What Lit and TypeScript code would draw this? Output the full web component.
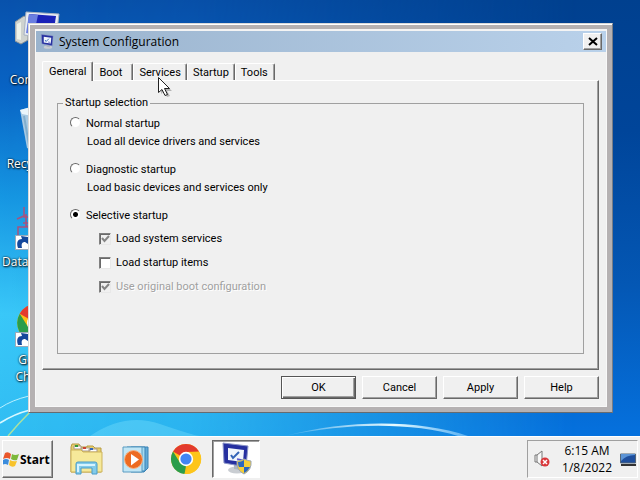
import { LitElement, html, css, svg } from "lit";
import { customElement, state } from "lit/decorators.js";

const shortcutArrow = svg`
  <rect x="0.5" y="23.5" width="14" height="14" fill="#fff" stroke="#9ab"/>
  <path d="M3 36c-2-6 0-9 4-9l-1-3 7 1 0 7-3-2c-3 0-4 2-3 6z" fill="#15489c"/>`;

const chromeLogo = svg`
  <circle cx="16" cy="16" r="15" fill="#fbc116"/>
  <path d="M16 16 L3 8.500A15 15 0 0 1 29 8.500 L16 9z" fill="#e33b2e"/>
  <path d="M3 8.500 L9.900 19.500 L16 23 L14.500 31A15 15 0 0 1 3 8.500z" fill="#2a9d4b"/>
  <path d="M16 9H29.300A15 15 0 0 1 14.500 31L22 19.500z" fill="#fdc51b"/>
  <circle cx="16" cy="16" r="7.200" fill="#fff"/>
  <circle cx="16" cy="16" r="5.600" fill="#4285f4"/>`;

@customElement("desktop-wallpaper")
export class DesktopWallpaper extends LitElement {
  static styles = css`
    :host { position: absolute; inset: 0; }
    svg { display: block; width: 100%; height: 100%; }
  `;
  render() {
    return html`<svg viewBox="0 0 640 436" preserveAspectRatio="none" aria-hidden="true">
      <defs>
        <linearGradient id="base" x1="0" y1="0" x2="0" y2="1">
          <stop offset="0" stop-color="#00408f"/><stop offset="0.3" stop-color="#00459a"/>
          <stop offset="0.65" stop-color="#0457b4"/><stop offset="1" stop-color="#0571de"/>
        </linearGradient>
        <linearGradient id="left" x1="0" y1="0" x2="0" y2="1">
          <stop offset="0" stop-color="#0852ac"/><stop offset="0.2" stop-color="#0863c4"/>
          <stop offset="0.45" stop-color="#1596e2"/><stop offset="0.72" stop-color="#39c8f8"/>
          <stop offset="1" stop-color="#30bdf2"/>
        </linearGradient>
        <linearGradient id="fade" x1="0" y1="0" x2="1" y2="0">
          <stop offset="0" stop-color="#fff"/><stop offset="0.3" stop-color="#ddd"/>
          <stop offset="0.9" stop-color="#000"/>
        </linearGradient>
        <linearGradient id="arc" x1="0" y1="0" x2="1" y2="0">
          <stop offset="0" stop-color="#fff" stop-opacity="0.1"/><stop offset="0.6" stop-color="#e8fbff"/>
          <stop offset="1" stop-color="#8cd0ff" stop-opacity="0.6"/>
        </linearGradient>
        <mask id="m"><rect width="640" height="436" fill="url(#fade)"/></mask>
      </defs>
      <rect width="640" height="436" fill="url(#base)"/>
      <rect width="640" height="436" fill="url(#left)" mask="url(#m)"/>
      <path d="M90 436Q125 412 160 424T200 436z" fill="#8deaff" opacity="0.3"/>
      <path d="M285 436C350 419 420 420 468 436L458 436C415 423 350 422 285 436z" fill="url(#arc)"/>
      <path d="M0 423Q14 414 30 410" fill="none" stroke="#d8f8ff" stroke-width="1.500"/>
      <path d="M0 408Q12 400 29 396" fill="none" stroke="#b8f0ff"/>
      <path d="M8 436Q18 424 30 412" fill="none" stroke="#a9e2a0" stroke-width="1.500"/>
    </svg>`;
  }
}

@customElement("desktop-icons")
export class DesktopIcons extends LitElement {
  static styles = css`
    :host { position: relative; display: block; width: 76px; }
    ul { list-style: none; margin: 0; padding: 8px 0 0; display: grid; grid-auto-rows: 98px; }
    li { display: flex; flex-direction: column; align-items: center; gap: 3px; }
    svg { width: 46px; height: 46px; }
    .tall svg { height: 60px; }
    span { font: 12px/17px "Open Sans", "Noto Sans", sans-serif; color: #fff; text-align: center;
      text-shadow: 1px 1px 2px #000, 0 0 2px #000; }
    .start { align-self: flex-start; padding-left: 2px; }
  `;
  render() {
    return html`<ul>
      <li class="tall"><svg viewBox="0 0 46 60" aria-hidden="true">
        <path d="M0 14l9-6 4 2v22l-7 4-6-3z" fill="#cfd3cf" stroke="#8a9297"/>
        <path d="M2 16l4-2v18l-4-1z" fill="#eef2e9"/>
        <path d="M11 4l33 2-3 25-32-4z" fill="#e9edf4" stroke="#a8b3c2"/>
        <path d="M14 6l27 2-3 20-26-3z" fill="#1a22b8"/>
        <path d="M14 6l9 1-4 19-8-1z" fill="#6a7ee0"/></svg><span>Computer</span></li>
      <li><svg viewBox="0 0 46 46" aria-hidden="true">
        <path d="M5 4q16-6 34 0l-6 38q-12 5-21 0z" fill="#b8d3e6" opacity="0.9"/>
        <path d="M5 4q16-6 34 0l-2 4q-15 4-30 0z" fill="#eaf5fb"/>
        <path d="M9 10l5 29M16 11l3 30" stroke="#82aecd" stroke-width="2"/></svg><span>Recycle Bin</span></li>
      <li><svg viewBox="0 0 46 46" aria-hidden="true">
        <path d="M2 15l9-4v12H3v9h8M9 3v10H18M8 19h9M11 21l7 8v8l-8-3" fill="none" stroke="#a8527f" stroke-width="1.500"/>
        <g transform="translate(0 8)">${shortcutArrow}</g></svg><span class="start">DataW</span></li>
      <li><svg viewBox="0 0 46 46" aria-hidden="true">
        <g transform="translate(1 1) scale(1.250)">${chromeLogo}</g>
        <g transform="translate(0 7)">${shortcutArrow}</g></svg><span>Google<br>Chrome</span></li>
    </ul>`;
  }
}

const monitor = svg`
  <ellipse cx="18" cy="28" rx="9" ry="3.500" fill="#c9cdd2"/>
  <path d="M15 22l7 2 0 4-7-1z" fill="#aeb6bf"/>
  <path d="M4 1l25 3-2 21-22-4z" fill="#2630a0" stroke="#8b95c8"/>
  <path d="M9 6l16 2-1 12-15-2z" fill="#f1f6fc"/>
  <path d="M12 13l2 3 6-6" fill="none" stroke="#3465b8" stroke-width="2"/>
  <path d="M18 17l5 1" stroke="#55c" stroke-width="1.500"/>`;

@customElement("config-window")
export class ConfigWindow extends LitElement {
  @state() private mode = "selective";

  static styles = css`
    :host { display: block; background: #b5b1b2; padding: 5px 5px 5px 6px; box-sizing: border-box;
      border: 1px solid #d9d9d9; border-right-color: #767c86; border-bottom-color: #666b70;
      box-shadow: inset 1px 1px #fff; font: 11px/18px Roboto, "Liberation Sans", sans-serif; color: #000; }
    * { box-sizing: border-box; }
    .body { background: #f0f0f0; border: 1px solid #f8f8f8; border-top: 2px solid #f4f4f4; }
    header { display: flex; align-items: center; height: 21px; padding: 0 4px;
      background: linear-gradient(90deg, #9ab3cd, #b9d1ea); }
    header svg { width: 15px; height: 15px; margin-right: 4px; }
    h1 { flex: 1; margin: 0; font: 12px/20px "Open Sans", "Noto Sans", sans-serif; }
    button { font: inherit; color: inherit; background: #f0f0f0; padding: 0; border: 1px solid;
      border-color: #fff #696969 #696969 #fff; box-shadow: inset -1px -1px #a0a0a0; }
    .close { width: 19px; height: 17px; display: grid; place-items: center; }
    .close svg { width: 10px; height: 9px; margin: 0; }
    main { padding: 9px 7px 7px 6px; }
    nav { display: flex; align-items: flex-end; height: 20px; margin-bottom: -1px; position: relative; }
    .tab { height: 17px; margin-bottom: 1px; min-width: 40px; padding: 0 5px; text-align: left; line-height: 15px;
      border-bottom: 0; box-shadow: inset -1px 0 #a0a0a0; border-radius: 2px 2px 0 0; }
    .tab.on { height: 20px; margin-bottom: 0; padding: 0 6px; line-height: 15px; }
    .panel { border: 1px solid; border-color: #fff #696969 #696969 #fff; box-shadow: inset -1px -1px #a0a0a0;
      padding: 15px 14px; }
    fieldset { margin: 0; min-width: 0; padding: 5px 12px 54px; border: 1px solid #a0a0a0; }
    legend { margin-left: -7px; padding: 0 2px; line-height: 14px; }
    .choice { display: grid; grid-template-columns: 16px 1fr; margin-bottom: 10px; }
    .choice p { grid-column: 2; margin: 0; padding-left: 1px; }
    .choice:last-of-type { margin-bottom: 0; }
    .sub { display: grid; grid-auto-rows: 24px; padding: 2px 0 0 29px; }
    .sub div { display: grid; grid-template-columns: 17px 1fr; align-items: center; }
    input { appearance: none; margin: 0; width: 12px; height: 12px; background: #fff;
      border: 1px solid; border-color: #808080 #e8e8e8 #e8e8e8 #808080; box-shadow: inset 1px 1px #696969; }
    input[type="radio"] { border-radius: 50%; width: 11px; height: 11px; margin-top: 2px; box-shadow: none;
      border-color: #696969 #f0f0f0 #f0f0f0 #696969; }
    input[type="radio"]:checked { background: radial-gradient(circle, #000 2px, #fff 3px); }
    .check { display: grid; width: 12px; height: 12px; }
    .check > * { grid-area: 1 / 1; }
    .check svg { width: 12px; height: 12px; z-index: 1; pointer-events: none; }
    .check input:disabled { background: #f0f0f0; }
    .off { color: #a0a0a0; text-shadow: 1px 1px #fff; }
    footer { display: flex; justify-content: flex-end; gap: 6px; padding-top: 6px; }
    footer button { width: 75px; height: 23px; }
    footer .default { border-color: #555; box-shadow: inset 1px 1px #fff, inset -1px -1px #696969, inset -2px -2px #a0a0a0; }
  `;

  private choice(id: string, label: string, text = "") {
    return html`<div class="choice">
      <input type="radio" name="startup" id=${id} .checked=${this.mode === id} @change=${() => (this.mode = id)}>
      <label for=${id}>${label}</label>${text ? html`<p>${text}</p>` : ""}</div>`;
  }

  private tick(id: string, label: string, checked: boolean, disabled = false, faded = false) {
    return html`<div><span class="check"><input type="checkbox" id=${id} .checked=${checked} ?disabled=${disabled}>
      ${checked ? html`<svg viewBox="0 0 12 12" aria-hidden="true"><path d="M3 5l2.500 3L10 3" fill="none" stroke="#858585" stroke-width="2"/></svg>` : ""}</span>
      <label class=${faded ? "off" : ""} for=${id}>${label}</label></div>`;
  }

  render() {
    return html`<div class="body">
      <header><svg viewBox="2 0 30 32" aria-hidden="true">${monitor}</svg>
        <h1>System Configuration</h1>
        <button class="close" aria-label="Close"><svg viewBox="0 0 10 9"><path d="M1 1l8 7M9 1L1 8" stroke="#000" stroke-width="2"/></svg></button>
      </header>
      <main>
        <nav role="tablist">${["General", "Boot", "Services", "Startup", "Tools"].map((t, i) =>
          html`<button role="tab" aria-selected=${i === 0} class=${i === 0 ? "tab on" : "tab"}>${t}</button>`)}</nav>
        <div class="panel"><fieldset><legend>Startup selection</legend>
          ${this.choice("normal", "Normal startup", "Load all device drivers and services")}
          ${this.choice("diagnostic", "Diagnostic startup", "Load basic devices and services only")}
          ${this.choice("selective", "Selective startup")}
          <section class="sub">
            ${this.tick("services", "Load system services", true, true)}
            ${this.tick("items", "Load startup items", false)}
            ${this.tick("original", "Use original boot configuration", true, true, true)}
          </section></fieldset></div>
        <footer><button class="default">OK</button><button>Cancel</button><button>Apply</button><button>Help</button></footer>
      </main></div>`;
  }
}

@customElement("task-bar")
export class TaskBar extends LitElement {
  static styles = css`
    :host { display: flex; align-items: stretch; box-sizing: border-box; height: 44px; padding: 3px 2px 2px;
      background: #f0f0f0; border-top: 1px solid #fff; font: 12px/17px "Open Sans", "Noto Sans", sans-serif; color: #000; }
    * { box-sizing: border-box; }
    button { font: inherit; color: inherit; padding: 0; background: none; border: 0; display: grid; place-items: center; }
    .start { display: flex; align-items: center; gap: 1px; width: 51px; padding-left: 0; font-weight: bold;
      border: 1px solid; border-color: #fff #696969 #696969 #fff; box-shadow: inset -1px -1px #a0a0a0; }
    .start svg { width: 16px; height: 16px; }
    .apps { display: flex; flex: 1; padding-left: 9px; gap: 2px; }
    .apps button { width: 48px; }
    .apps svg { width: 34px; height: 34px; }
    .apps .active { background: #fff; border: 1px solid; border-color: #696969 #fff #fff #696969; box-shadow: inset 1px 1px #a0a0a0; }
    .tray { display: flex; align-items: center; padding: 0 1px 0 6px; border: 1px solid; border-color: #a0a0a0 #fff #fff #a0a0a0; }
    .tray svg { width: 16px; height: 18px; }
    time { text-align: center; display: block; padding: 0 8px 0 12px; }
  `;
  render() {
    return html`
      <button class="start"><svg viewBox="0 0 16 16" aria-hidden="true">
        <path d="M2 2q3-2 6 1L7 8Q4 6 0 8z" fill="#e9562a"/><path d="M9 3q3 2 7 0l-2 6q-3 1-6-1z" fill="#7cb83a"/>
        <path d="M0 9q3-2 6 0l-1 5q-3-2-6 0z" fill="#3c8cdc"/><path d="M7 9q3 2 7 1l-2 5q-3 2-6-1z" fill="#f8c32c"/>
      </svg>Start</button>
      <div class="apps">
        <button aria-label="Explorer"><svg viewBox="0 0 34 34">
          <path d="M2 5l1-3h7l2 3h6V4h6l2 2h6v24H2z" fill="#e5cf70" stroke="#b99c43"/>
          <path d="M5 4h7v3H5zM13 6h8v3h-8zM20 7h8v3h-8z" fill="#fff" stroke="#a98"/>
          <path d="M6 3h3v2H6z" fill="#393"/><path d="M14 5h3v2h-3z" fill="#c43"/><path d="M21 6h3v2h-3z" fill="#36b"/>
          <path d="M2 8h10l2 2h19v20H2z" fill="#f6e99a" stroke="#cdb35a"/>
          <path d="M7 32V22q0-2 2-2h17q2 0 2 2v10h-5v-6H12v6z" fill="#83cbea" stroke="#4a9cc8"/>
          <path d="M9 30v-7h17" fill="none" stroke="#d6f3ff" stroke-width="2"/></svg></button>
        <button aria-label="Media Player"><svg viewBox="0 0 34 34">
          <path d="M12 5h17v21l-4 4H12z" fill="#62abd8" stroke="#3b83b5"/>
          <path d="M8 5h18v24H8z" fill="#a5daf1" stroke="#3b83b5"/>
          <path d="M4 5h19v25H4z" fill="#c1e6f5" stroke="#5a9cc2"/>
          <circle cx="14.500" cy="17.500" r="9" fill="#ed6b21" stroke="#f6b182"/>
          <path d="M12 12l8 5.500-8 6z" fill="#fff"/></svg></button>
        <button aria-label="Chrome"><svg viewBox="0 0 34 34"><g transform="translate(1 1)">${chromeLogo}</g></svg></button>
        <button class="active" aria-label="System Configuration"><svg viewBox="0 0 34 34">${monitor}
          <path d="M25 17q4 2 7 2 1 9-7 13-8-4-7-13 3 0 7-2z" fill="#f5cf39" stroke="#9aa6b5"/>
          <path d="M25 18q-3 2-6 2 0 3 1 5h5zM25 25h6q-2 4-6 6z" fill="#2a67c0"/></svg></button>
      </div>
      <div class="tray">
        <svg viewBox="0 0 16 18" aria-label="Muted">
          <path d="M1 5h2l5-4v15l-5-4H1zM3 5v7" fill="#f8f8f8" stroke="#777"/>
          <circle cx="11" cy="12" r="4.500" fill="#d9373a"/><path d="M9 10l4 4M13 10l-4 4" stroke="#fff" stroke-width="1.500"/></svg>
        <time datetime="2022-01-08T06:15">6:15 AM<br>1/8/2022</time>
        <svg viewBox="0 0 16 18" aria-hidden="true"><path d="M0.500 4h15v9h-15z" fill="#1f4f9d" stroke="#567"/>
          <path d="M1 11Q6 5 15 5V4H1z" fill="#5c94d6"/><path d="M1 14h15v2H1z" fill="#333"/></svg>
      </div>`;
  }
}

@customElement("app-root")
export class AppRoot extends LitElement {
  static styles = css`
    :host { display: flex; flex-direction: column; min-height: 100vh; }
    .desktop { position: relative; flex: 1; overflow: hidden; }
    config-window { position: absolute; left: 28px; right: 27px; top: 23px; }
    .pointer { position: absolute; left: 157px; top: 76px; width: 16px; height: 22px; }
  `;
  render() {
    return html`<div class="desktop">
        <desktop-wallpaper></desktop-wallpaper>
        <desktop-icons></desktop-icons>
        <config-window></config-window>
        <svg class="pointer" viewBox="0 0 16 22" aria-hidden="true">
          <path d="M4 4v14l3-3 3 6 3-1-3-5h5z" fill="#000" opacity="0.25"/>
          <path d="M1.500 1.500v15l3.500-3 3 6 2.500-1-3-6h5z" fill="#fff" stroke="#222"/></svg>
      </div>
      <task-bar></task-bar>`;
  }
}
